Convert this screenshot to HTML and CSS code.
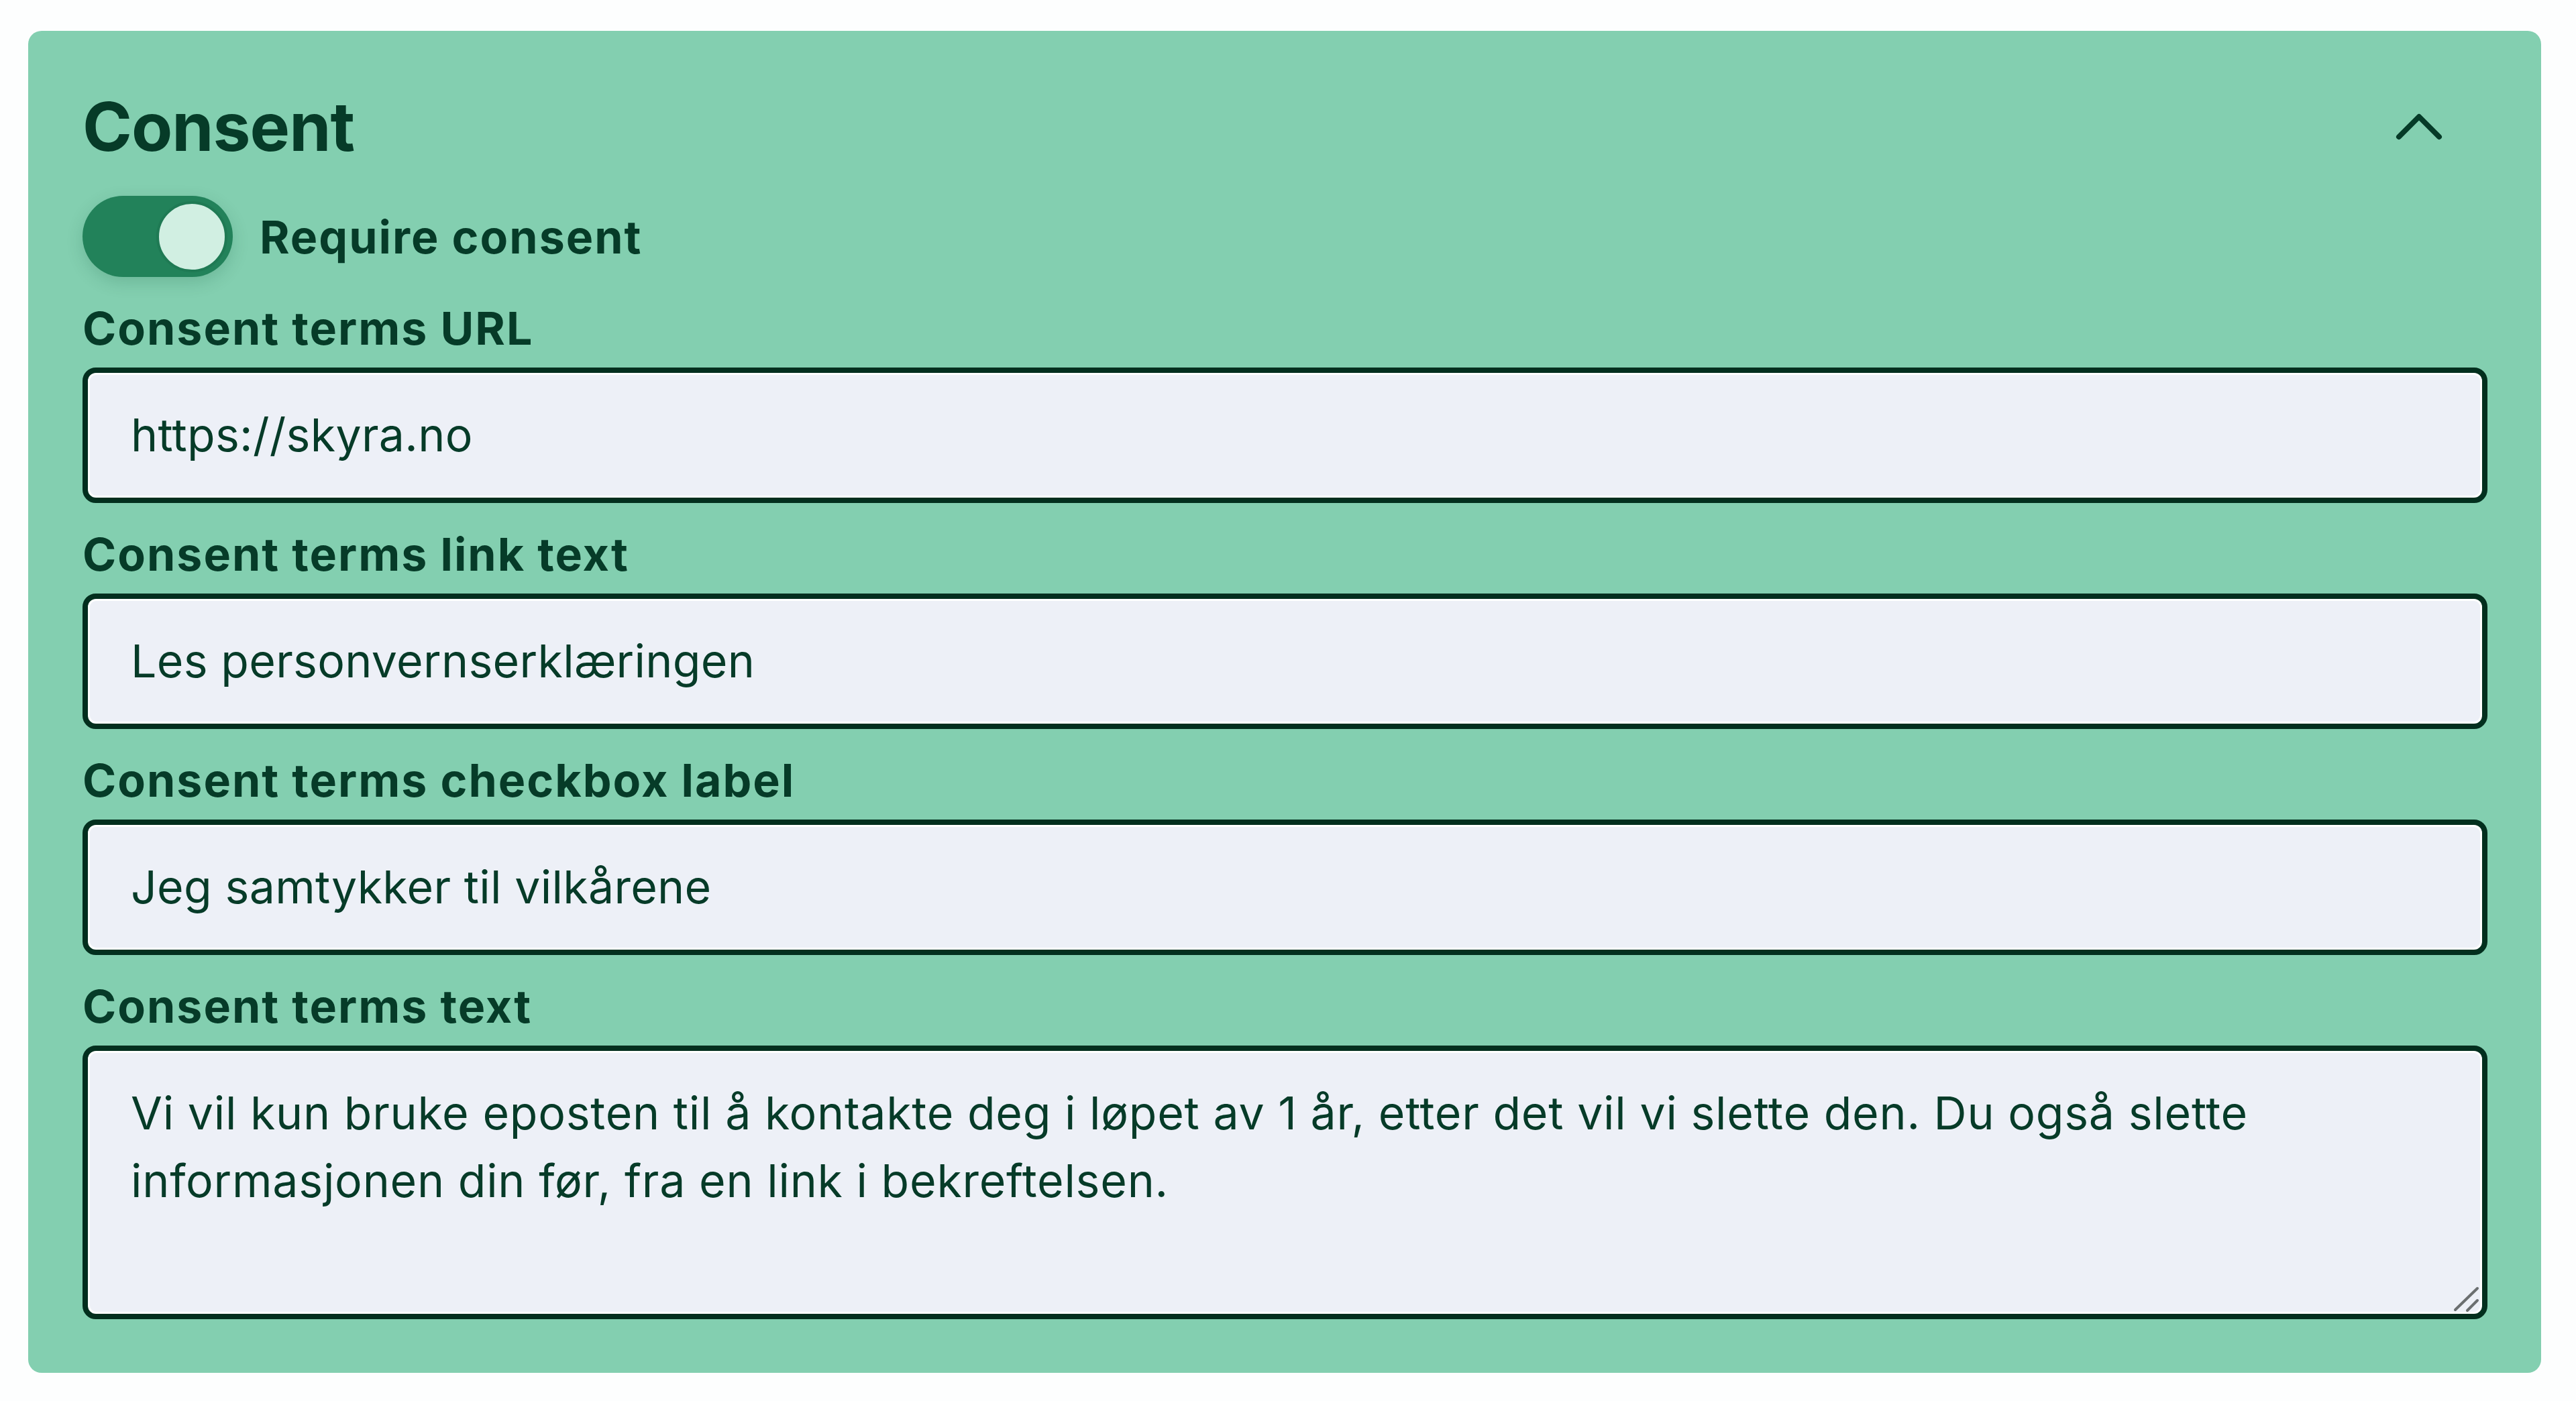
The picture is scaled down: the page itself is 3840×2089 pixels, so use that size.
FILE: index.html
```html
<!DOCTYPE html>
<html lang="no">
<head>
<meta charset="utf-8">
<title>Consent</title>
<link rel="stylesheet" href="styles.css">
</head>
<body>
<section class="card">
  <header class="card-head">
    <h2 class="title">Consent</h2>
    <svg class="chevron" viewBox="0 0 100 100" aria-hidden="true"><path d="M20 65 L50 35 L80 65"/></svg>
  </header>
  <div class="toggle-row">
    <span class="toggle"><span class="knob"></span></span>
    <span class="toggle-label">Require consent</span>
  </div>
  <div class="field">
    <label class="label">Consent terms URL</label>
    <div class="input">https://skyra.no</div>
  </div>
  <div class="field">
    <label class="label">Consent terms link text</label>
    <div class="input">Les personvernserklæringen</div>
  </div>
  <div class="field">
    <label class="label">Consent terms checkbox label</label>
    <div class="input">Jeg samtykker til vilkårene</div>
  </div>
  <div class="field">
    <label class="label">Consent terms text</label>
    <div class="textarea-wrap">
      <textarea class="input textarea">Vi vil kun bruke eposten til å kontakte deg i løpet av 1 år, etter det vil vi slette den. Du også slette informasjonen din før, fra en link i bekreftelsen.</textarea>
      <svg class="grip" viewBox="0 0 40 40" aria-hidden="true"><path d="M4 36 L37 4 M22 37 L37 22"/></svg>
    </div>
  </div>
</section>
</body>
</html>
```

FILE: styles.css
```css
* { box-sizing: border-box; }
html, body { margin: 0; padding: 0; }
body {
  background: #fdfefe;
  font-family: Inter, "Noto Sans", sans-serif;
  color: #063b28;
}
.card {
  margin: 46px 52px 0 42px;
  height: 2001px;
  background: #83cfb0;
  border-radius: 20px;
  padding: 83px 80px 82px 81px;
  display: flex;
  flex-direction: column;
  gap: 37px;
}
.card-head {
  display: flex;
  align-items: center;
  justify-content: space-between;
  height: 120px;
  margin-bottom: 6px;
}
.title {
  margin: 0;
  font-size: 100px;
  line-height: 120px;
  font-weight: 700;
  letter-spacing: -1px;
  color: #063b28;
}
.chevron {
  width: 100px;
  height: 100px;
  margin-right: 52px;
  fill: none;
  stroke: #063b28;
  stroke-width: 8;
  stroke-linecap: round;
  stroke-linejoin: round;
}
.toggle-row {
  display: flex;
  align-items: center;
  gap: 40px;
  height: 121px;
}
.toggle {
  width: 224px;
  height: 121px;
  border-radius: 61px;
  background: #22825a;
  display: flex;
  align-items: center;
  justify-content: flex-end;
  padding-right: 8px;
  box-shadow: 0 8px 24px rgba(10, 80, 50, 0.18);
}
.knob {
  width: 106px;
  height: 106px;
  border-radius: 50%;
  background: #d1efe2;
  border: 4px solid #1f7a54;
}
.toggle-label,
.label {
  font-size: 68px;
  font-weight: 700;
  line-height: 78px;
  letter-spacing: 2px;
}
.field {
  display: flex;
  flex-direction: column;
  gap: 20px;
}
.input {
  display: block;
  width: 100%;
  height: 202px;
  border: 8px solid #032f1e;
  border-radius: 20px;
  background: #edf0f7;
  box-shadow: inset 0 0 0 3px #ffffff;
  padding: 42px 64px;
  font-family: Inter, "Noto Sans", sans-serif;
  font-size: 68px;
  line-height: 101px;
  letter-spacing: 0.3px;
  font-weight: 400;
  color: #063b28;
  white-space: nowrap;
}
.textarea-wrap {
  position: relative;
}
.textarea {
  height: 408px;
  white-space: pre-wrap;
  letter-spacing: 0.75px;
  resize: none;
  margin: 0;
  outline: none;
  overflow: hidden;
}
.grip {
  position: absolute;
  right: 12px;
  bottom: 10px;
  width: 40px;
  height: 40px;
  fill: none;
  stroke: #6b6f70;
  stroke-width: 4;
  stroke-linecap: round;
}
```
